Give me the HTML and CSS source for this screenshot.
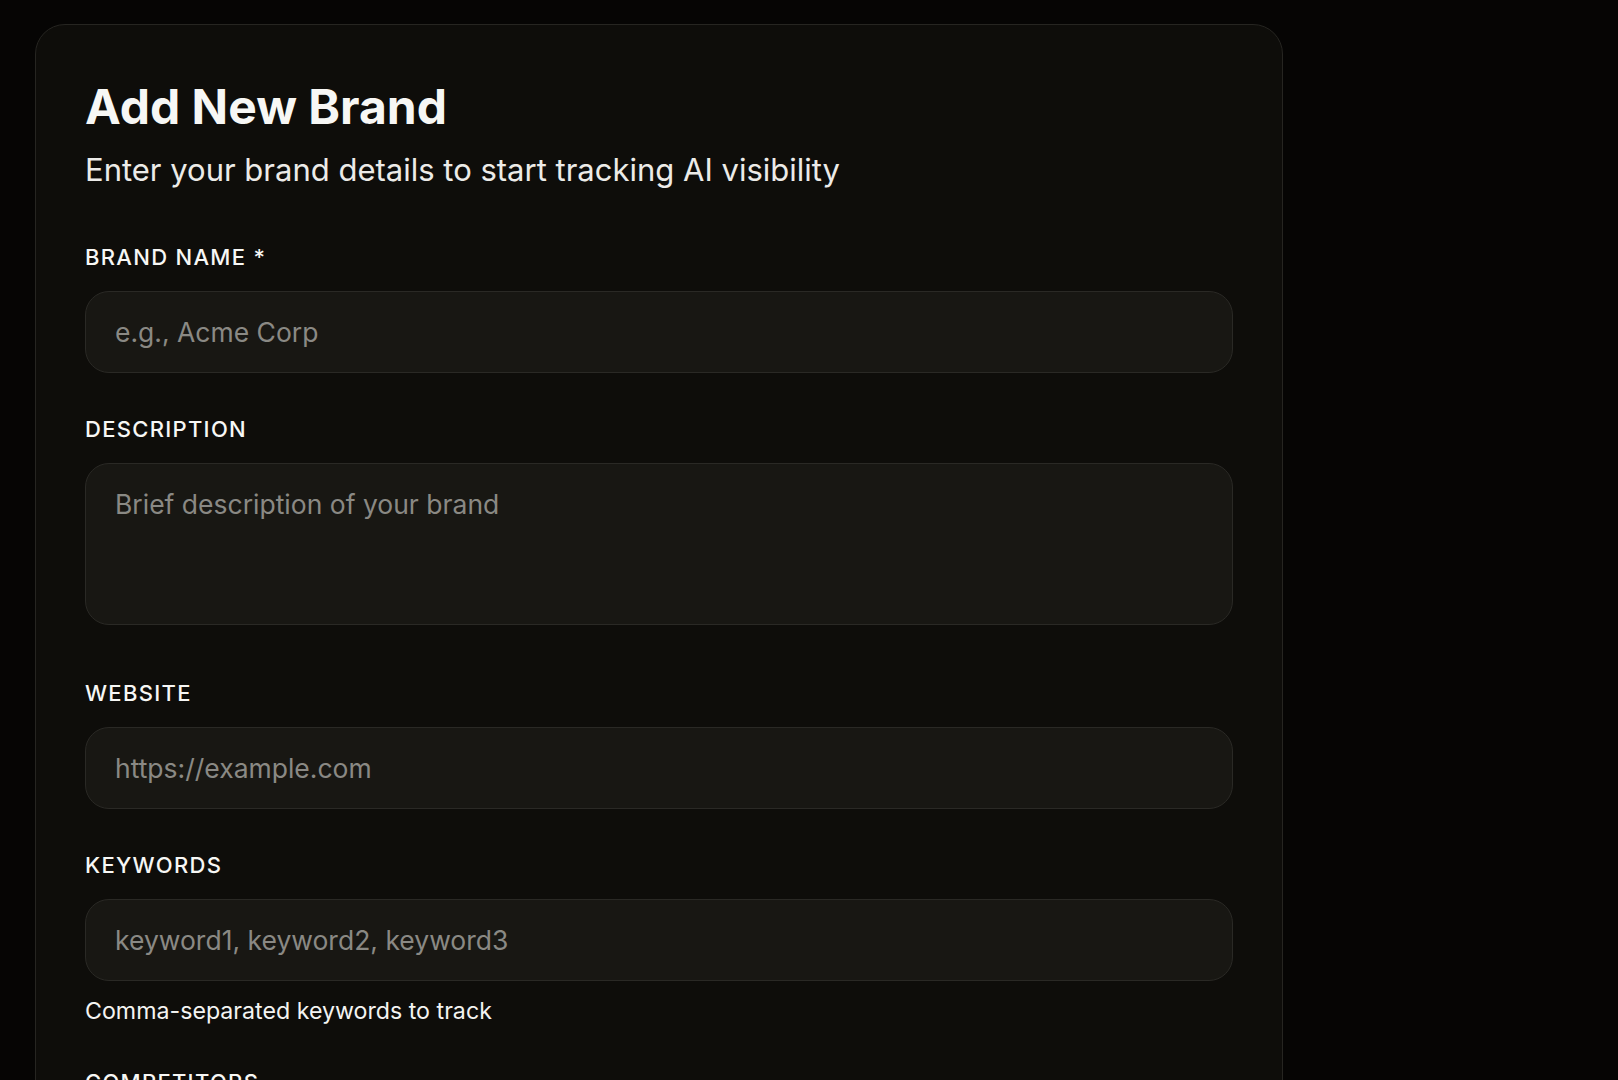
FILE: index.html
```html
<!DOCTYPE html>
<html lang="en">
<head>
<meta charset="utf-8">
<title>Add New Brand</title>
<link rel="stylesheet" href="styles.css">
</head>
<body>
<main class="page">
  <section class="card">
    <h1 class="title">Add New Brand</h1>
    <p class="subtitle">Enter your brand details to start tracking AI visibility</p>
    <form class="form">
      <div class="field">
        <label class="label" for="name">BRAND NAME *</label>
        <input class="input" id="name" type="text" placeholder="e.g., Acme Corp">
      </div>
      <div class="field">
        <label class="label" for="desc">DESCRIPTION</label>
        <textarea class="input textarea" id="desc" placeholder="Brief description of your brand"></textarea>
      </div>
      <div class="field">
        <label class="label" for="web">WEBSITE</label>
        <input class="input" id="web" type="text" placeholder="https://example.com">
      </div>
      <div class="field">
        <label class="label" for="kw">KEYWORDS</label>
        <input class="input" id="kw" type="text" placeholder="keyword1, keyword2, keyword3">
        <p class="help">Comma-separated keywords to track</p>
      </div>
      <div class="field">
        <label class="label" for="comp">COMPETITORS</label>
        <input class="input" id="comp" type="text" placeholder="competitor1, competitor2">
        <p class="help">Comma-separated competitor names</p>
      </div>
    </form>
  </section>
</main>
</body>
</html>
```

FILE: styles.css
```css
* { box-sizing: border-box; }
html, body { margin: 0; padding: 0; background: #060504; }
body { font-family: Inter, "Noto Sans", sans-serif; color: #f4f4f2; }
.page { padding: 24px 0 40px 35px; }
.card {
  width: 1248px;
  background: #0e0d0a;
  border: 1px solid #262521;
  border-radius: 30px;
  padding: 48px 49px 48px 49px;
}
.title {
  margin: 5px 0 0;
  font-size: 48px;
  line-height: 58px;
  font-weight: 700;
  color: #f7f7f5;
}
.subtitle {
  margin: 14px 0 0;
  font-size: 31px;
  line-height: 40px;
  color: #ecebe8;
}
.form { display: flex; flex-direction: column; gap: 41.5px; margin-top: 52px; }
.field { display: flex; flex-direction: column; }
.label {
  font-size: 22px;
  line-height: 30px;
  font-weight: 500;
  letter-spacing: 1.3px;
  color: #f7f7f5;
  margin-bottom: 18.5px;
}
.input {
  display: block;
  width: 100%;
  height: 82px;
  background: #181713;
  border: 1px solid #2a2925;
  border-radius: 24px;
  padding: 0 29px;
  font-family: inherit;
  font-size: 26.5px;
  color: #f4f4f2;
  outline: none;
}
.input::placeholder { color: #8a8984; }
.textarea {
  height: 162px;
  padding: 21px 29px;
  line-height: 38px;
  resize: none;
  margin-bottom: 12px;
}
.help {
  margin: 15px 0 0;
  font-size: 23.2px;
  line-height: 30px;
  color: #f4f4f2;
}
```
